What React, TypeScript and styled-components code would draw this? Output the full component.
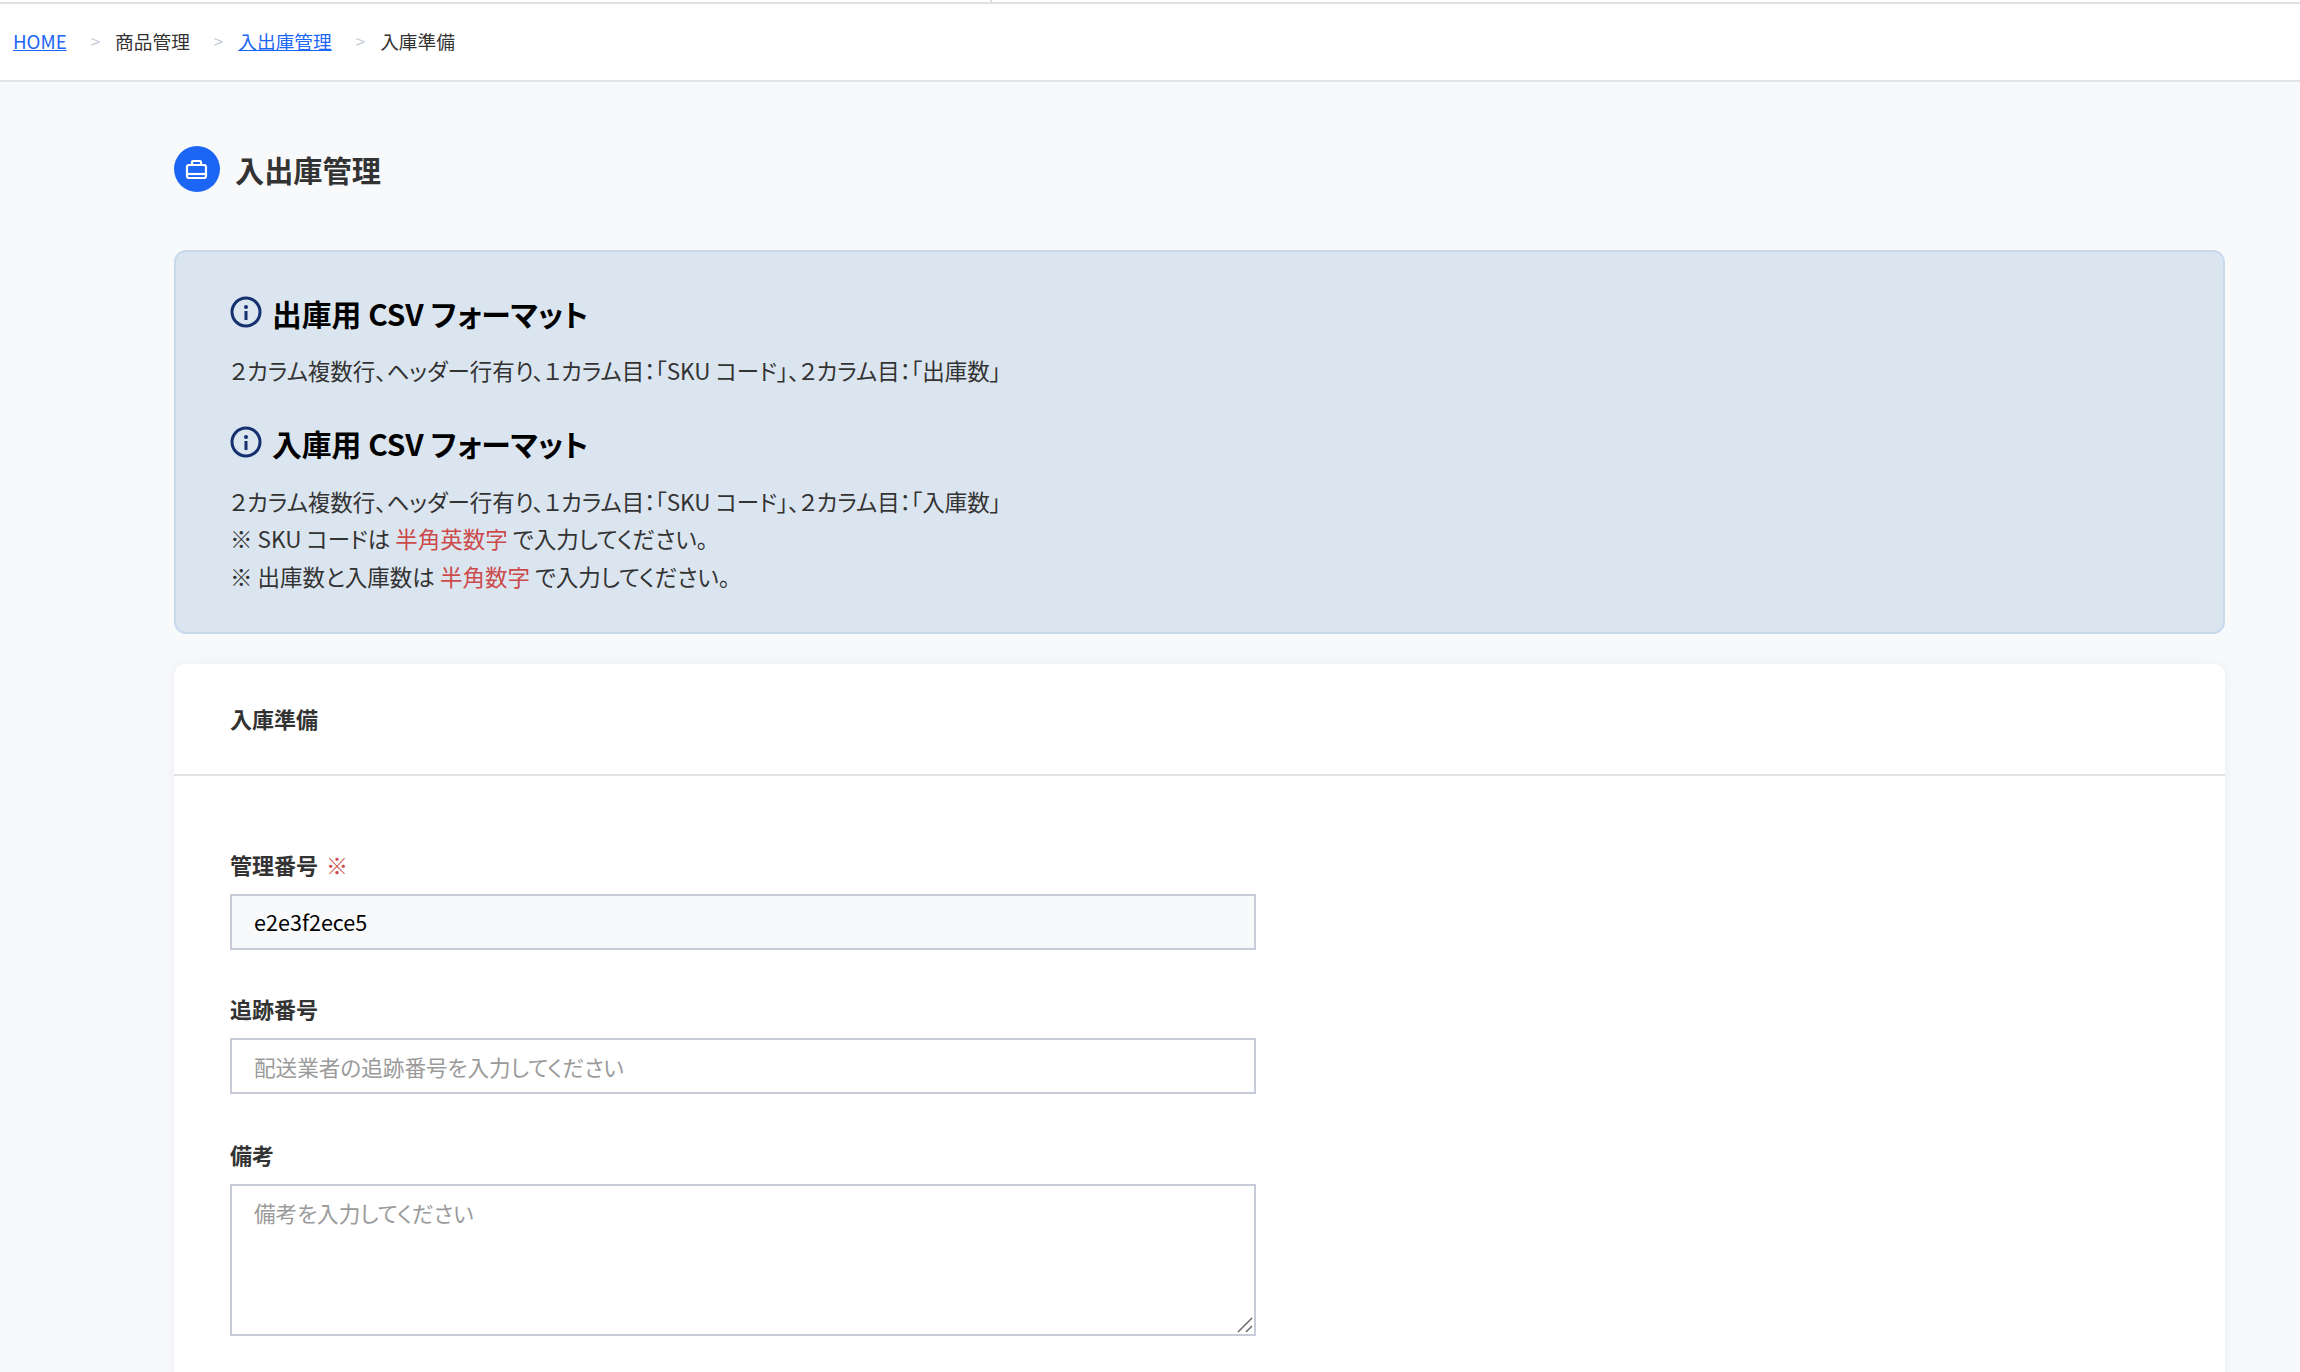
import React from 'react';
import styled, { createGlobalStyle } from 'styled-components';

const GlobalStyle = createGlobalStyle`
  html, body {
    margin: 0;
    padding: 0;
    background: #f8f9fb;
  }
  body {
    font-family: 'Noto Sans CJK JP', 'Noto Sans', sans-serif;
    font-feature-settings: 'palt';
    color: #333333;
    height: 1372px;
    overflow: hidden;
  }
  * {
    box-sizing: border-box;
  }
`;

const TopEdge = styled.div`
  position: relative;
  height: 4px;
  background: #ffffff;
  border-bottom: 2px solid #e0e0e0;
  &::before {
    content: '';
    position: absolute;
    top: 0;
    left: 990px;
    width: 2px;
    height: 2px;
    background: #e0e0e0;
  }
`;

const Breadcrumb = styled.nav`
  display: flex;
  align-items: center;
  height: 78px;
  padding: 0 13px 4px;
  background: #ffffff;
  border-bottom: 2px solid #e2e4ea;
  font-size: 18.7px;
`;

const CrumbLink = styled.a`
  color: #1b66f5;
  text-decoration: underline;
`;

const CrumbText = styled.span`
  color: #333333;
`;

const CrumbSep = styled.span`
  margin: 0 15px 0 24px;
  color: #c8ccd9;
  font-size: 17px;
`;

const Main = styled.main`
  padding: 64px 75px 0 174px;
`;

const PageTitle = styled.div`
  display: flex;
  align-items: center;
  gap: 15px;
  height: 46px;
  margin-bottom: 58px;
`;

const TitleIcon = styled.span`
  display: flex;
  align-items: center;
  justify-content: center;
  width: 46px;
  height: 46px;
  border-radius: 50%;
  background: #1b66f5;
`;

const TitleText = styled.h1`
  margin: 0;
  font-size: 29.2px;
  font-weight: 700;
  color: #333333;
`;

const InfoPanel = styled.section`
  height: 384px;
  padding: 43px 54px 0;
  margin-bottom: 30px;
  background: #dbe5ef;
  border: 2px solid #c9d9ee;
  border-radius: 12px;
`;

const InfoHeading = styled.h2<{ $gap: number }>`
  display: flex;
  align-items: center;
  gap: 10px;
  height: 36px;
  margin: 0 0 ${(p) => p.$gap}px;
  font-size: 29.8px;
  font-weight: 700;
  color: #000000;
`;

const InfoGlyph = styled.svg`
  flex: none;
  margin-bottom: 2px;
`;

const InfoLine = styled.p<{ $gap?: number }>`
  margin: 0 0 ${(p) => p.$gap ?? 0}px;
  font-size: 22.5px;
  line-height: 37.5px;
  color: #333333;
`;

const Red = styled.span`
  color: #cc4a4a;
`;

const Card = styled.section`
  background: #ffffff;
  border-radius: 12px 12px 0 0;
  box-shadow: 0 0 12px rgba(40, 50, 80, 0.06);
`;

const CardHeader = styled.div`
  display: flex;
  align-items: center;
  height: 112px;
  padding: 0 56px 2px;
  border-bottom: 2px solid #e3e3e3;
  font-size: 22px;
  font-weight: 700;
  color: #333333;
`;

const CardBody = styled.div`
  padding: 72px 56px 100px;
`;

const Field = styled.div<{ $gap: number }>`
  width: 1026px;
  margin-bottom: ${(p) => p.$gap}px;
`;

const Label = styled.label`
  display: block;
  height: 46px;
  font-size: 22px;
  line-height: 32px;
  font-weight: 700;
  color: #333333;
`;

const Required = styled.span`
  margin-left: 8px;
  font-weight: 400;
  color: #cc4a4a;
`;

const TextInput = styled.input<{ $filled?: boolean }>`
  display: block;
  width: 100%;
  height: 56px;
  padding: 0 22px ${(p) => (p.$filled ? '2px' : '0')};
  border: 2px solid #c8ccd9;
  border-radius: 0;
  outline: none;
  background: ${(p) => (p.$filled ? '#f8f9fb' : '#ffffff')};
  font-family: inherit;
  font-feature-settings: inherit;
  font-size: 21.6px;
  color: #000000;
  &::placeholder {
    color: #9a9a9a;
  }
`;

const AreaWrap = styled.div`
  position: relative;
  height: 152px;
`;

const TextArea = styled.textarea`
  display: block;
  width: 100%;
  height: 100%;
  padding: 11px 22px;
  border: 2px solid #c8ccd9;
  border-radius: 0;
  outline: none;
  resize: none;
  background: #ffffff;
  font-family: inherit;
  font-feature-settings: inherit;
  font-size: 21.6px;
  color: #000000;
  &::placeholder {
    color: #9a9a9a;
  }
`;

const ResizeGrip = styled.svg`
  position: absolute;
  right: 3px;
  bottom: 3px;
  pointer-events: none;
`;

const BriefcaseIcon = () => (
  <svg width="24" height="24" viewBox="0 0 24 24" fill="none" stroke="#ffffff" strokeWidth="2.200">
    <path d="M7 8V5a1 1 0 0 1 1-1h7a1 1 0 0 1 1 1v3" />
    <rect x="2" y="8" width="19" height="13" rx="2" />
    <path d="M2 17h19" />
  </svg>
);

const InfoIcon = () => (
  <InfoGlyph width="32" height="32" viewBox="0 0 32 32" fill="none" stroke="#14306f">
    <circle cx="16" cy="16" r="14" strokeWidth="3" />
    <path d="M16 15v9" strokeWidth="3" />
    <circle cx="16" cy="11" r="2" fill="#14306f" stroke="none" />
  </InfoGlyph>
);

export default function App() {
  return (
    <>
      <GlobalStyle />
      <TopEdge />
      <Breadcrumb>
        <CrumbLink href="#">HOME</CrumbLink>
        <CrumbSep>&gt;</CrumbSep>
        <CrumbText>商品管理</CrumbText>
        <CrumbSep>&gt;</CrumbSep>
        <CrumbLink href="#">入出庫管理</CrumbLink>
        <CrumbSep>&gt;</CrumbSep>
        <CrumbText>入庫準備</CrumbText>
      </Breadcrumb>
      <Main>
        <PageTitle>
          <TitleIcon>
            <BriefcaseIcon />
          </TitleIcon>
          <TitleText>入出庫管理</TitleText>
        </PageTitle>
        <InfoPanel>
          <InfoHeading $gap={21}>
            <InfoIcon />
            出庫用 CSV フォーマット
          </InfoHeading>
          <InfoLine $gap={35}>
            ２カラム複数行、ヘッダー行有り、１カラム目：「SKU コード」、２カラム目：「出庫数」
          </InfoLine>
          <InfoHeading $gap={22}>
            <InfoIcon />
            入庫用 CSV フォーマット
          </InfoHeading>
          <InfoLine>
            ２カラム複数行、ヘッダー行有り、１カラム目：「SKU コード」、２カラム目：「入庫数」
          </InfoLine>
          <InfoLine>
            ※ SKU コードは <Red>半角英数字</Red> で入力してください。
          </InfoLine>
          <InfoLine>
            ※ 出庫数と入庫数は <Red>半角数字</Red> で入力してください。
          </InfoLine>
        </InfoPanel>
        <Card>
          <CardHeader>入庫準備</CardHeader>
          <CardBody>
            <Field $gap={42}>
              <Label>
                管理番号<Required>※</Required>
              </Label>
              <TextInput $filled defaultValue="e2e3f2ece5" />
            </Field>
            <Field $gap={44}>
              <Label>追跡番号</Label>
              <TextInput placeholder="配送業者の追跡番号を入力してください" />
            </Field>
            <Field $gap={0}>
              <Label>備考</Label>
              <AreaWrap>
                <TextArea placeholder="備考を入力してください" />
                <ResizeGrip width="16" height="16" viewBox="0 0 16 16" stroke="#666666" strokeWidth="1.500">
                  <path d="M1 15L15 1" />
                  <path d="M9 15L15 9" />
                </ResizeGrip>
              </AreaWrap>
            </Field>
          </CardBody>
        </Card>
      </Main>
    </>
  );
}
